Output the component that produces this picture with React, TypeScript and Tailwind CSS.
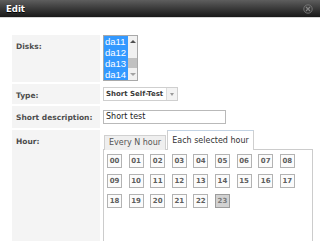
const HOURS = Array.from({ length: 24 }, (_, i) => String(i).padStart(2, "0"));
const DISKS = ["da11", "da12", "da13", "da14"];

const Label = ({ text }: { text: string }) => (
  <div className="w-[88px] shrink-0 bg-[#f4f4f4] pl-[4px] pt-[7px] text-[7.5px] leading-[10px] font-bold text-[#4d4d4d]">
    {text}
  </div>
);

const App = () => {
  return (
    <div className="w-[320px] h-[241px] overflow-hidden bg-white font-['DejaVu_Sans',sans-serif]">
      {/* Title bar */}
      <div className="h-[18px] bg-gradient-to-b from-[#5e5e5e] via-[#3a3a3a] to-[#181818] border-b border-[#d6d6d6] flex items-center justify-between pl-[6px] pr-[7px]">
        <span className="text-white font-bold text-[8.5px] leading-[10px] [text-shadow:0_1px_0_#000]">Edit</span>
        <svg width="10" height="10" viewBox="0 0 10 10">
          <circle cx="5" cy="5" r="4.2" fill="none" stroke="#747474" strokeWidth="1" />
          <path d="M3 3 L7 7 M7 3 L3 7" stroke="#858585" strokeWidth="1.2" />
        </svg>
      </div>

      <div className="pt-[17px] pl-[12px] flex flex-col gap-[2px]">
        {/* Disks */}
        <div className="flex h-[47px]">
          <Label text="Disks:" />
          <div className="pl-[3px]">
            <div className="w-[35px] h-[46px] border border-[#a9a9a9] flex">
              <div className="w-[24px] flex flex-col font-['Liberation_Sans',sans-serif]">
                {DISKS.map((d) => (
                  <div key={d} className="h-[11px] bg-[#3399ff] text-white text-[9.5px] leading-[11px] pl-[1px]">{d}</div>
                ))}
              </div>
              <div className="w-[9px] bg-[#f1f1f1] flex flex-col items-center">
                <div className="h-[10px] flex items-center justify-center">
                  <div className="w-0 h-0 border-l-[3px] border-r-[3px] border-b-[3px] border-l-transparent border-r-transparent border-b-[#505050]" />
                </div>
                <div className="h-[12px]" />
                <div className="w-[9px] h-[10px] bg-[#c1c1c1]" />
                <div className="flex-1 flex items-center justify-center">
                  <div className="w-0 h-0 border-l-[3px] border-r-[3px] border-t-[3px] border-l-transparent border-r-transparent border-t-[#a3a3a3]" />
                </div>
              </div>
            </div>
          </div>
        </div>

        {/* Type */}
        <div className="flex h-[20px]">
          <Label text="Type:" />
          <div className="pl-[3px] pt-[3px]">
            <div className="w-[75px] h-[14px] border border-[#cfcfcf] flex bg-white">
              <div className="flex-1 pl-[2px] text-[7px] leading-[12px] font-bold text-[#3a3a3a] whitespace-nowrap overflow-hidden">Short Self-Test</div>
              <div className="w-[11px] border-l border-[#dcdcdc] bg-[#f3f3f3] flex items-center justify-center">
                <div className="w-0 h-0 border-l-[2.5px] border-r-[2.5px] border-t-[3px] border-l-transparent border-r-transparent border-t-[#9a9a9a]" />
              </div>
            </div>
          </div>
        </div>

        {/* Short description */}
        <div className="flex h-[22px]">
          <Label text="Short description:" />
          <div className="pl-[3px] pt-[4px]">
            <div className="w-[123px] h-[14px] border border-[#b9b9b9] bg-white pl-[2px] text-[8px] leading-[12px] text-[#222]">Short test</div>
          </div>
        </div>

        {/* Hour */}
        <div className="flex h-[112px]">
          <Label text="Hour:" />
          <div className="pl-[3px] pt-[1px] flex flex-col">
            <div className="flex items-end gap-[1px] pl-[1px] h-[19px] relative z-10 -mb-[1px]">
              <div className="w-[62px] h-[15px] border border-b-0 border-[#d0d0d0] bg-[#efefef] text-[8px] leading-[13px] text-[#555] text-center">Every N hour</div>
              <div className="w-[87px] h-[20px] border border-b-0 border-[#cfcfcf] border-t-[#c3d3e3] bg-white text-[8px] leading-[17px] pt-[1px] text-[#333] text-center">Each selected hour</div>
            </div>
            <div className="w-[210px] flex-1 border border-[#cccccc] bg-white pl-[3px] pt-[4px]">
              <div className="grid grid-cols-[repeat(9,15px)] gap-x-[6.6px] gap-y-[6px]">
                {HOURS.map((h) => (
                  <div
                    key={h}
                    className={`h-[14px] border flex items-center justify-center text-[7px] font-bold ${h === "23" ? "bg-[#d2d2d2] border-[#9c9c9c] text-[#7a7a7a]" : "bg-[#fbfbfb] border-[#b3b3b3] text-[#5e5e5e]"}`}
                  >
                    {h}
                  </div>
                ))}
              </div>
            </div>
          </div>
        </div>
      </div>
    </div>
  );
};

export default App;
